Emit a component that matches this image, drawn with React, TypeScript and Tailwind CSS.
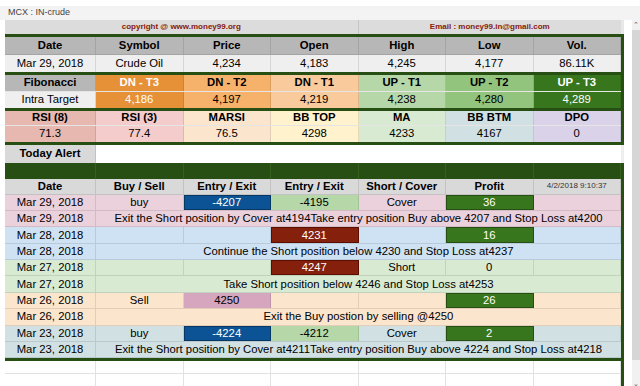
const cols = 'grid grid-cols-[91px_repeat(6,87.5px)]'

const Cell = ({ children, className = '' }: any) => (
  <div className={`flex items-center justify-center border-r border-black/10 whitespace-nowrap overflow-hidden ${className}`}>
    {children}
  </div>
)

const GreenLine = ({ h = 'h-[3px]' }: any) => <div className={`${h} w-[619px] bg-[#274e13]`} />

const top = {
  head: ['Date', 'Symbol', 'Price', 'Open', 'High', 'Low', 'Vol.'],
  vals: ['Mar 29, 2018', 'Crude Oil', '4,234', '4,183', '4,245', '4,177', '86.11K'],
}

const fib = [
  { h: 'DN - T3', v: '4,186', c: 'bg-[#e69138] text-white' },
  { h: 'DN - T2', v: '4,197', c: 'bg-[#f6b26b]' },
  { h: 'DN - T1', v: '4,219', c: 'bg-[#f9cb9c]' },
  { h: 'UP - T1', v: '4,238', c: 'bg-[#b6d7a8]' },
  { h: 'UP - T2', v: '4,280', c: 'bg-[#93c47d]' },
  { h: 'UP - T3', v: '4,289', c: 'bg-[#38761d] text-white' },
]

const ind = [
  { h: 'RSI (8)', v: '71.3', c: 'bg-[#e6b8af]' },
  { h: 'RSI (3)', v: '77.4', c: 'bg-[#f4cccc]' },
  { h: 'MARSI', v: '76.5', c: 'bg-[#fce5cd]' },
  { h: 'BB TOP', v: '4298', c: 'bg-[#fff2cc]' },
  { h: 'MA', v: '4233', c: 'bg-[#d9ead3]' },
  { h: 'BB BTM', v: '4167', c: 'bg-[#d0e0e3]' },
  { h: 'DPO', v: '0', c: 'bg-[#d9d2e9]' },
]

const blue = 'bg-[#0b5394] text-white outline outline-1 outline-[#073763] -outline-offset-1'
const lgreen = 'bg-[#b6d7a8]'
const red = 'bg-[#85200c] text-white outline outline-1 outline-[#5b0f00] -outline-offset-1'
const profit = 'bg-[#38761d] text-white outline outline-1 outline-[#274e13] -outline-offset-1'

const alerts = [
  {
    date: 'Mar 29, 2018', bg: 'bg-[#ead1dc]',
    cells: [{ v: 'buy' }, { v: '-4207', c: blue }, { v: '-4195', c: lgreen }, { v: 'Cover' }, { v: '36', c: profit }, { v: '' }],
    msg: 'Exit the Short position by Cover at4194Take entry position Buy above 4207 and Stop Loss at4200',
  },
  {
    date: 'Mar 28, 2018', bg: 'bg-[#cfe2f3]',
    cells: [{ v: '' }, { v: '' }, { v: '4231', c: red }, { v: '' }, { v: '16', c: profit }, { v: '' }],
    msg: 'Continue the Short position below 4230 and Stop Loss at4237',
  },
  {
    date: 'Mar 27, 2018', bg: 'bg-[#d9ead3]',
    cells: [{ v: '' }, { v: '' }, { v: '4247', c: red }, { v: 'Short' }, { v: '0' }, { v: '' }],
    msg: 'Take Short position below 4246 and Stop Loss at4253',
  },
  {
    date: 'Mar 26, 2018', bg: 'bg-[#fce5cd]',
    cells: [{ v: 'Sell' }, { v: '4250', c: 'bg-[#d5a6bd]' }, { v: '' }, { v: '' }, { v: '26', c: profit }, { v: '' }],
    msg: 'Exit the Buy postion by selling @4250',
  },
  {
    date: 'Mar 23, 2018', bg: 'bg-[#d0e0e3]',
    cells: [{ v: 'buy' }, { v: '-4224', c: blue }, { v: '-4212', c: lgreen }, { v: 'Cover' }, { v: '2', c: profit }, { v: '' }],
    msg: 'Exit the Short position by Cover at4211Take entry position Buy above 4224 and Stop Loss at4218',
  },
]

const Sheet = () => (
  <div className="flex flex-col w-[622px] pl-[5px] text-[11.3px] text-black">
    {/* copyright row */}
    <div className={`${cols} h-[14px] w-[619px] bg-[#dcdcdc] border-r-[3px] border-[#e8e8e8] text-[8px] font-bold text-[#85200c]`}>
      <Cell className="col-span-4">copyright @ www.money99.org</Cell>
      <Cell className="col-span-3 border-r-0">Email : money99.in@gmail.com</Cell>
    </div>
    <GreenLine />

    {/* quote block */}
    <div className="w-[619px] border-r-[3px] border-[#274e13]">
      <div className={`${cols} h-[18px] bg-[#b7b7b7] font-bold border-b border-black/10`}>
        {top.head.map((h) => <Cell key={h}>{h}</Cell>)}
      </div>
      <div className={`${cols} h-[17px] bg-[#efefef]`}>
        {top.vals.map((v) => <Cell key={v}>{v}</Cell>)}
      </div>
    </div>
    <GreenLine />

    {/* fibonacci block */}
    <div className="w-[619px] border-r-[3px] border-[#274e13]">
      <div className={`${cols} h-[17px] font-bold border-b border-black/10`}>
        <Cell className="bg-[#b7b7b7]">Fibonacci</Cell>
        {fib.map((f) => <Cell key={f.h} className={f.c}>{f.h}</Cell>)}
      </div>
      <div className={`${cols} h-[16px]`}>
        <Cell className="bg-[#efefef]">Intra Target</Cell>
        {fib.map((f) => <Cell key={f.v} className={f.c}>{f.v}</Cell>)}
      </div>
    </div>
    <GreenLine />

    {/* indicators */}
    <div className="w-[619px] border-r-[3px] border-[#274e13]">
      <div className={`${cols} h-[15px] font-bold border-b border-black/10`}>
        {ind.map((f) => <Cell key={f.h} className={f.c}>{f.h}</Cell>)}
      </div>
      <div className={`${cols} h-[16px]`}>
        {ind.map((f) => <Cell key={f.h} className={f.c}>{f.v}</Cell>)}
      </div>
    </div>
    <GreenLine />

    {/* today alert */}
    <div className={`${cols} h-[18px] w-[619px] bg-white border-r-[3px] border-[#eeeeee]`}>
      <Cell className="bg-[#d9d9d9] font-bold">Today Alert</Cell>
      <Cell className="col-span-6 border-r-0" />
    </div>

    {/* alert table */}
    <div className="w-[619px] border-r-[3px] border-[#274e13]">
      <div className={`${cols} h-[16px] bg-[#274e13]`}>
        {[0, 1, 2, 3, 4, 5, 6].map((i) => <div key={i} className="border-r border-[#35611f]" />)}
      </div>
      <div className={`${cols} h-[16px] bg-[#d9d9d9] font-bold border-b border-black/10`}>
        {['Date', 'Buy / Sell', 'Entry / Exit', 'Entry / Exit', 'Short / Cover', 'Profit'].map((h, i) => (
          <Cell key={i}>{h}</Cell>
        ))}
        <Cell className="text-[8px] font-normal text-[#333]">4/2/2018 9:10:37</Cell>
      </div>
      {alerts.map((a) => (
        <div key={a.date + a.msg}>
          <div className={`${cols} h-[16.4px] ${a.bg} border-b border-black/10`}>
            <Cell>{a.date}</Cell>
            {a.cells.map((c: any, i) => <Cell key={i} className={c.c || ''}>{c.v}</Cell>)}
          </div>
          <div className={`${cols} h-[16.4px] ${a.bg} border-b border-black/10`}>
            <Cell>{a.date}</Cell>
            <Cell className="col-span-6 border-r-0">{a.msg}</Cell>
          </div>
        </div>
      ))}
      <div className="h-[3px] bg-[#274e13]" />
      {[0, 1].map((r) => (
        <div key={r} className={`${cols} h-[13px] bg-white border-b border-[#e2e2e2]`}>
          {[0, 1, 2, 3, 4, 5, 6].map((i) => <div key={i} className="border-r border-[#e2e2e2]" />)}
        </div>
      ))}
    </div>
  </div>
)

export default function App() {
  return (
    <div className="w-[640px] h-[386px] overflow-hidden bg-white font-['Liberation_Sans',Arial,sans-serif] pt-[6px] flex flex-col">
      <div className="h-[18px] bg-[#f3f3f3] flex items-center pl-[8px] text-[9px] text-[#444]">MCX : IN-crude</div>
      <div className="flex flex-1">
        <Sheet />
        <div className="w-[10px]" />
        <div className="w-[8px] bg-[#f1f1f1] flex flex-col items-center">
          <div className="h-[10px] flex items-center text-[7px] text-[#555] leading-none">&#8963;</div>
          <div className="w-full h-[330px] bg-[#d6d6d6]" />
          <div className="flex-1" />
          <div className="h-[8px] flex items-center text-[7px] text-[#555] leading-none">&#8964;</div>
        </div>
      </div>
    </div>
  )
}
